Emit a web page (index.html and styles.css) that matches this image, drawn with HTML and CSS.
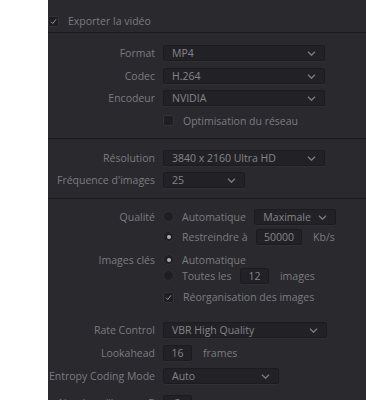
FILE: index.html
```html
<!DOCTYPE html>
<html lang="fr">
<head>
  <meta charset="UTF-8">
  <meta name="viewport" content="width=device-width, initial-scale=1.0">
  <title>Exporter la vidéo</title>
  <link rel="stylesheet" href="styles.css">
</head>
<body>
  <div class="panel">
    <!-- Export toggle -->
    <div class="section top">
      <div class="toggle">
        <span class="check on"><svg viewBox="0 0 11 11"><path d="M2.5 5.8 L4.6 8 L8.6 2.8"/></svg></span>
        <span>Exporter la vidéo</span>
      </div>
    </div>

    <!-- Format / codec -->
    <div class="section codec">
      <div class="row">
        <span class="label">Format</span>
        <div class="select w162">MP4<svg class="chev" viewBox="0 0 9 5"><path d="M1 0.8 L4.5 4.2 L8 0.8"/></svg></div>
      </div>
      <div class="row">
        <span class="label">Codec</span>
        <div class="select w162">H.264<svg class="chev" viewBox="0 0 9 5"><path d="M1 0.8 L4.5 4.2 L8 0.8"/></svg></div>
      </div>
      <div class="row">
        <span class="label">Encodeur</span>
        <div class="select w162">NVIDIA<svg class="chev" viewBox="0 0 9 5"><path d="M1 0.8 L4.5 4.2 L8 0.8"/></svg></div>
      </div>
      <div class="row">
        <span class="label"></span>
        <span class="check"></span>
        <span class="opt">Optimisation du réseau</span>
      </div>
    </div>

    <!-- Resolution -->
    <div class="section res">
      <div class="row">
        <span class="label">Résolution</span>
        <div class="select w162">3840 x 2160 Ultra HD<svg class="chev" viewBox="0 0 9 5"><path d="M1 0.8 L4.5 4.2 L8 0.8"/></svg></div>
      </div>
      <div class="row">
        <span class="label">Fréquence d'images</span>
        <div class="select w82">25<svg class="chev" viewBox="0 0 9 5"><path d="M1 0.8 L4.5 4.2 L8 0.8"/></svg></div>
      </div>
    </div>

    <!-- Quality -->
    <div class="section quality">
      <div class="row">
        <span class="label">Qualité</span>
        <span class="radio"></span>
        <span class="opt">Automatique</span>
        <div class="select w82 after">Maximale<svg class="chev" viewBox="0 0 9 5"><path d="M1 0.8 L4.5 4.2 L8 0.8"/></svg></div>
      </div>
      <div class="row m4">
        <span class="label"></span>
        <span class="radio on"></span>
        <span class="opt">Restreindre à</span>
        <div class="input w45 after">50000</div>
        <span class="unit">Kb/s</span>
      </div>
      <div class="row m7">
        <span class="label">Images clés</span>
        <span class="radio on"></span>
        <span class="opt">Automatique</span>
      </div>
      <div class="row m0">
        <span class="label"></span>
        <span class="radio"></span>
        <span class="opt">Toutes les</span>
        <div class="input w29 after">12</div>
        <span class="unit">images</span>
      </div>
      <div class="row m5">
        <span class="label"></span>
        <span class="check on"><svg viewBox="0 0 11 11"><path d="M2.5 5.8 L4.6 8 L8.6 2.8"/></svg></span>
        <span class="opt">Réorganisation des images</span>
      </div>
    </div>

    <!-- Encoder tuning -->
    <div class="section tuning">
      <div class="row">
        <span class="label">Rate Control</span>
        <div class="select w164">VBR High Quality<svg class="chev" viewBox="0 0 9 5"><path d="M1 0.8 L4.5 4.2 L8 0.8"/></svg></div>
      </div>
      <div class="row">
        <span class="label">Lookahead</span>
        <div class="input w29">16</div>
        <span class="unit">frames</span>
      </div>
      <div class="row">
        <span class="label">Entropy Coding Mode</span>
        <div class="select w116">Auto<svg class="chev" viewBox="0 0 9 5"><path d="M1 0.8 L4.5 4.2 L8 0.8"/></svg></div>
      </div>
      <div class="row last">
        <span class="label">Nombre d'images B</span>
        <div class="input w29">2</div>
      </div>
    </div>
  </div>
</body>
</html>
```

FILE: styles.css
```css
body {
  margin: 0;
  background: #ffffff;
  font-family: "Open Sans", "DejaVu Sans", sans-serif;
  font-size: 10.5px;
  line-height: 16px;
}
.panel {
  margin-left: 48px;
  height: 400px;
  background: #29292e;
  overflow: hidden;
  color: #7c7c80;
}
.section {
  border-bottom: 1px solid #1b1b1f;
}
.section.top {
  height: 33px;
  box-sizing: border-box;
  padding-top: 15px;
}
.section.codec {
  padding: 12px 0 9.5px;
}
.section.res {
  padding: 10.5px 0 10px;
}
.section.quality {
  padding: 9.5px 0 0;
  border-bottom: none;
}
.section.tuning {
  padding-top: 17px;
  border-bottom: none;
}
.codec .row + .row,
.res .row + .row {
  margin-top: 6.5px;
}
.tuning .row + .row {
  margin-top: 7px;
}
.tuning .row.last {
  margin-top: 11px;
}
.row {
  display: flex;
  align-items: center;
  height: 16px;
}
.row.m0 { margin-top: 0; }
.row.m4 { margin-top: 4px; }
.row.m5 { margin-top: 5.5px; }
.row.m7 { margin-top: 7px; }
.label {
  flex: none;
  width: 107px;
  margin-right: 8px;
  display: flex;
  justify-content: flex-end;
  white-space: nowrap;
}
.toggle {
  display: flex;
  align-items: center;
  height: 12px;
  gap: 9px;
}
.select,
.input {
  flex: none;
  box-sizing: border-box;
  height: 16px;
  background: #222226;
  border: 1px solid #1c1c20;
  border-radius: 2px;
  box-shadow: 0 1px 0 rgba(255, 255, 255, 0.03);
  color: #858589;
  white-space: nowrap;
}
.select {
  position: relative;
  padding-left: 8px;
  line-height: 14px;
}
.input {
  text-align: center;
  line-height: 14px;
}
.chev {
  position: absolute;
  right: 8px;
  top: 5px;
  width: 9px;
  height: 5px;
  fill: none;
  stroke: #7e7e82;
  stroke-width: 1.3;
}
.w162 { width: 162px; }
.w164 { width: 164px; }
.w116 { width: 116px; }
.w82 { width: 82px; }
.w45 { width: 46px; }
.w29 { width: 29px; }
.after {
  margin-left: 8.5px;
}
.unit {
  margin-left: 11px;
}
.check {
  flex: none;
  box-sizing: border-box;
  width: 11px;
  height: 11px;
  background: #1f1f23;
  border: 1px solid #333338;
  border-radius: 2px;
  margin-right: 9px;
}
.toggle .check {
  margin-right: 0;
}
.check svg {
  display: block;
  width: 9px;
  height: 9px;
  fill: none;
  stroke: #98989c;
  stroke-width: 1.2;
}
.radio {
  flex: none;
  box-sizing: border-box;
  width: 11px;
  height: 11px;
  border-radius: 50%;
  background: #1f1f23;
  border: 1px solid #313136;
  margin-right: 8px;
  display: flex;
  align-items: center;
  justify-content: center;
}
.radio.on::after {
  content: "";
  width: 4px;
  height: 4px;
  border-radius: 50%;
  background: #adadb1;
}
.opt {
  white-space: nowrap;
}
```
